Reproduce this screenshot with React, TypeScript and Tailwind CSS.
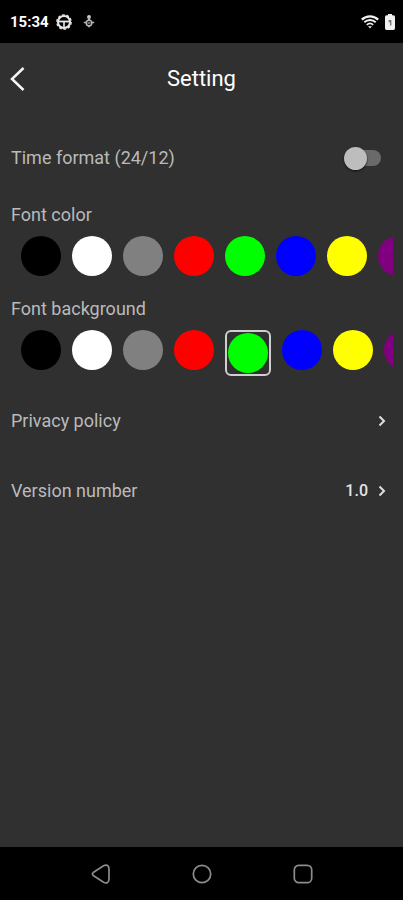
import { useState } from "react";

const COLORS = [
  { name: "Black", fill: "bg-black" },
  { name: "White", fill: "bg-white" },
  { name: "Gray", fill: "bg-[#808080]" },
  { name: "Red", fill: "bg-[#ff0000]" },
  { name: "Green", fill: "bg-[#00ff00]" },
  { name: "Blue", fill: "bg-[#0000ff]" },
  { name: "Yellow", fill: "bg-[#ffff00]" },
  { name: "Purple", fill: "bg-[#800080]" },
];

function StatusBar() {
  return (
    <div className="flex h-[43px] shrink-0 items-center justify-between bg-black pr-2 pl-[10px] text-white">
      <div className="flex items-center pt-px">
        <span className="text-[15px] leading-5 font-bold">15:34</span>
        <svg className="ml-[7px] size-4" viewBox="0 0 16 16" fill="none" stroke="#e8e8e8" aria-hidden="true">
          <circle cx="8" cy="8" r="6" strokeWidth="2" />
          <circle cx="8" cy="8" r="7.200" strokeWidth="1.300" strokeDasharray="2.800 1.725" />
          <path d="M3 7.500h10" strokeWidth="1.800" />
          <path d="M8 8v5" strokeWidth="1.600" />
        </svg>
        <svg className="ml-[11px] h-4 w-3" viewBox="0 0 12 16" fill="none" stroke="#b4b4b4" aria-hidden="true">
          <circle cx="6" cy="3" r="1.900" fill="#d4d4d4" stroke="none" />
          <path d="M6 3v4" strokeWidth="2.200" />
          <circle cx="6" cy="9" r="2.800" strokeWidth="1.500" />
          <path d="M0.800 8.500h2.400M8.800 8.500h2.400" strokeWidth="1.600" />
          <path d="M4.500 9h3" strokeWidth="1.200" />
          <path d="M4 11.500h4L6 13.800z" fill="#b4b4b4" stroke="none" />
        </svg>
      </div>
      <div className="flex items-center gap-[6px]">
        <svg className="h-4 w-[18px]" viewBox="0 0 18 16" fill="none" stroke="#f0f0f0" aria-hidden="true">
          <path d="M0.800 5.600C5.500 1.200 12.500 1.200 17.200 5.600" strokeWidth="2.200" />
          <path d="M3.300 8.300C6.500 5.300 11.500 5.300 14.700 8.300" strokeWidth="1.900" />
          <path d="M5.800 10.900C7.700 9.200 10.300 9.200 12.200 10.900" strokeWidth="1.700" />
          <path d="M7 12.300h4L9 14.600z" fill="#f0f0f0" stroke="none" />
        </svg>
        <svg className="h-4 w-[10px]" viewBox="0 0 10 16" aria-hidden="true">
          <path d="M3 0h4v1.300h1.500Q10 1.300 10 3v11q0 2-1.500 2h-7Q0 16 0 14V3q0-1.700 1.500-1.700H3z" fill="#f0f0f0" />
          <path d="M3.600 6h2.800v5.500H5V8.300H3.600z" fill="#777" />
        </svg>
      </div>
    </div>
  );
}

function Chevron() {
  return (
    <svg className="h-3 w-2" viewBox="0 0 8 12" fill="none" stroke="#dedede" strokeWidth="2" aria-hidden="true">
      <path d="M1.500 1.500L6 6L1.500 10.500" />
    </svg>
  );
}

type SwatchProps = {
  id: string;
  label: string;
  value: string | null;
  onChange: (name: string) => void;
};

function SwatchRow({ id, label, value, onChange }: SwatchProps) {
  return (
    <section role="radiogroup" aria-labelledby={id}>
      <h2 id={id} className="text-lg leading-6">
        {label}
      </h2>
      <div className="mt-[9px] flex items-start gap-[11px] overflow-hidden pl-[10px]">
        {COLORS.map((color) => (
          <label
            key={color.name}
            className={
              value === color.name
                ? "flex shrink-0 rounded-md border-2 border-[#cfcfcf] p-px"
                : "flex shrink-0"
            }
          >
            <input
              type="radio"
              name={id}
              aria-label={color.name}
              checked={value === color.name}
              onChange={() => onChange(color.name)}
              className={`size-10 appearance-none rounded-full ${color.fill}`}
            />
          </label>
        ))}
      </div>
    </section>
  );
}

export default function App() {
  const [is24, setIs24] = useState(false);
  const [fontColor, setFontColor] = useState<string | null>(null);
  const [background, setBackground] = useState<string | null>("Green");

  return (
    <div className="flex min-h-screen flex-col bg-[#303030] font-[Roboto,sans-serif] text-[#bababa]">
      <StatusBar />
      <header className="grid h-[72px] grid-cols-[1fr_auto_1fr] items-center px-[10px]">
        <button type="button" aria-label="Back" className="flex h-10 w-10 items-center">
          <svg className="h-6 w-4" viewBox="0 0 16 24" fill="none" stroke="#f5f5f5" strokeWidth="2.500" aria-hidden="true">
            <path d="M13.500 1L2 12L13.500 23" />
          </svg>
        </button>
        <h1 className="text-[22px] leading-7 text-white">Setting</h1>
      </header>
      <main className="flex grow flex-col pt-2 pr-[10px] pl-[11px]">
        <div className="flex h-[70px] items-center justify-between pr-3">
          <label htmlFor="time-format" className="text-lg leading-6">
            Time format (24/12)
          </label>
          <span className="relative flex h-6 w-[37px] items-center">
            <input
              id="time-format"
              type="checkbox"
              role="switch"
              checked={is24}
              onChange={() => setIs24(!is24)}
              className="peer ml-1 h-4 w-[33px] appearance-none rounded-full bg-[#6a6a6a]"
            />
            <span className="pointer-events-none absolute left-0 size-[23px] rounded-full bg-[#bdbdbd] shadow-[0_1px_2px_#111] peer-checked:right-0 peer-checked:left-auto" />
          </span>
        </div>
        <div className="flex flex-col gap-[21px] pt-[10px] pb-[10px]">
          <SwatchRow id="font-color" label="Font color" value={fontColor} onChange={setFontColor} />
          <SwatchRow id="font-background" label="Font background" value={background} onChange={setBackground} />
        </div>
        <a href="#privacy" className="flex h-[70px] items-center justify-between pr-[7px]">
          <span className="text-lg leading-6">Privacy policy</span>
          <Chevron />
        </a>
        <a href="#version" className="flex h-[70px] items-center justify-between pr-[7px]">
          <span className="text-lg leading-6">Version number</span>
          <span className="flex items-center gap-[10px] text-base font-medium text-[#e4e4e4]">
            1.0
            <Chevron />
          </span>
        </a>
      </main>
      <nav aria-label="System" className="flex h-[53px] shrink-0 items-center justify-center gap-[81px] bg-black">
        <button type="button" aria-label="Back">
          <svg className="size-5" viewBox="0 0 20 20" fill="none" stroke="#8c8c8c" strokeWidth="1.700" aria-hidden="true">
            <path d="M2.600 8.300L12.500 1.700Q18 -0.500 18 5.500V14.500Q18 20.500 12.500 18.300L2.600 11.700Q0.200 10 2.600 8.300Z" />
          </svg>
        </button>
        <button type="button" aria-label="Home">
          <svg className="size-5" viewBox="0 0 20 20" fill="none" stroke="#8c8c8c" strokeWidth="1.700" aria-hidden="true">
            <circle cx="10" cy="10" r="8.700" />
          </svg>
        </button>
        <button type="button" aria-label="Recent apps">
          <svg className="size-5" viewBox="0 0 20 20" fill="none" stroke="#8c8c8c" strokeWidth="1.700" aria-hidden="true">
            <rect x="1.300" y="1.300" width="17.400" height="17.400" rx="4.500" />
          </svg>
        </button>
      </nav>
    </div>
  );
}
